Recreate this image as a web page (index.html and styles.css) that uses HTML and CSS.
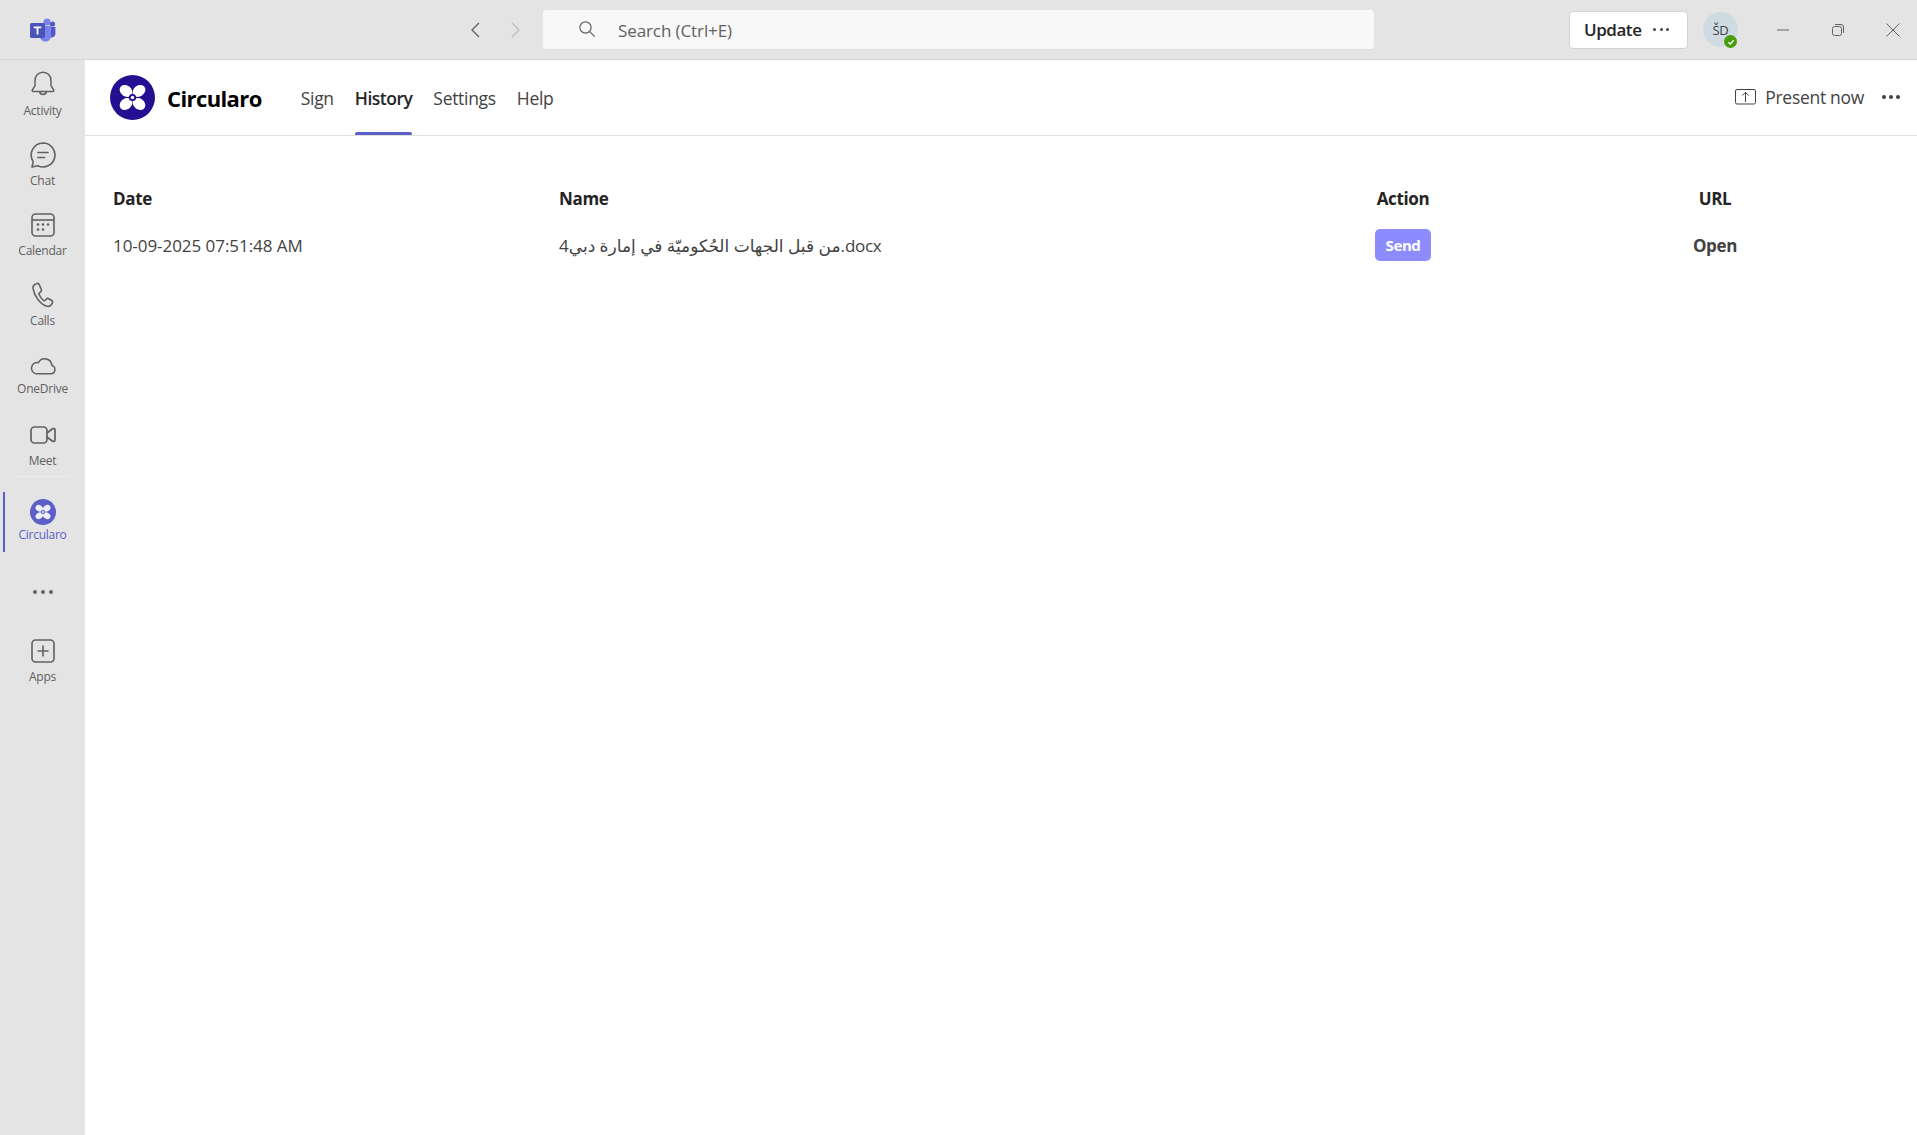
FILE: index.html
```html
<!DOCTYPE html>
<html lang="en">
<head>
<meta charset="utf-8">
<title>Circularo</title>
<link rel="stylesheet" href="styles.css">
</head>
<body>
<header class="titlebar">
  <div class="tb-logo">
    <svg viewBox="0 0 26 24" width="26" height="24">
      <circle cx="17" cy="4" r="3.6" fill="#7b83eb"/>
      <circle cx="22.500" cy="6" r="2.600" fill="#5059c9"/>
      <path d="M19 9h6.400v7a3.600 3.600 0 0 1-6.400 2z" fill="#5059c9"/>
      <path d="M9 8h12v10a5.500 5.500 0 0 1-11 .5z" fill="#7b83eb"/>
      <rect x="0" y="5" width="15" height="15" rx="1.600" fill="#4b53bc"/>
      <path d="M3.700 8.600h7.600v1.700H8.400v6.200H6.600v-6.200H3.700z" fill="#fff"/>
    </svg>
  </div>
  <nav class="tb-nav">
    <svg class="chev" viewBox="0 0 12 18" width="12" height="18"><path d="M10 2 3 9l7 7" fill="none" stroke="#616161" stroke-width="1.300"/></svg>
    <svg class="chev" viewBox="0 0 12 18" width="12" height="18"><path d="m2 2 7 7-7 7" fill="none" stroke="#bdbdbd" stroke-width="1.300"/></svg>
  </nav>
  <div class="search">
    <svg viewBox="0 0 18 18" width="18" height="18"><circle cx="7.500" cy="7.500" r="5.600" fill="none" stroke="#616161" stroke-width="1.200"/><path d="m11.700 11.700 5 5" stroke="#616161" stroke-width="1.200"/></svg>
    <span>Search (Ctrl+E)</span>
  </div>
  <button class="update"><span>Update</span><i class="dots dots-sm"><b></b><b></b><b></b></i></button>
  <div class="avatar">ŠD
    <span class="status"><svg viewBox="0 0 12 12" width="12" height="12"><path d="m3.400 6.200 1.800 1.800 3.500-3.700" fill="none" stroke="#fff" stroke-width="1.300"/></svg></span>
  </div>
  <div class="win">
    <svg viewBox="0 0 14 14" width="14" height="14"><path d="M1 7h12" stroke="#616161" stroke-width="1"/></svg>
    <svg viewBox="0 0 14 14" width="14" height="14"><rect x="1.500" y="3.500" width="9" height="9" rx="2" fill="none" stroke="#616161"/><path d="M4 1.500h6a2.500 2.500 0 0 1 2.500 2.500v6" fill="none" stroke="#616161"/></svg>
    <svg viewBox="0 0 14 14" width="14" height="14"><path d="m.5.5 13 13m0-13-13 13" stroke="#616161" stroke-width="1"/></svg>
  </div>
</header>
<div class="shell">
  <aside class="rail">
    <a class="rail-item r-activity">
      <svg viewBox="0 0 24 26" width="24" height="26"><path d="M12 1.200a8 8 0 0 0-8 8v5.300L1.300 19.200c-.3.600.1 1.300.8 1.300h19.800c.7 0 1.100-.7.800-1.300L20 14.500V9.200a8 8 0 0 0-8-8zM8.600 20.800a3.500 3.500 0 0 0 6.800 0" fill="none" stroke="#616161" stroke-width="1.500"/></svg>
      <span>Activity</span>
    </a>
    <a class="rail-item r-chat">
      <svg viewBox="0 0 26 26" width="26" height="26"><path d="M13 1a12 12 0 1 1-5.300 22.800L2 25l1.200-5.400A12 12 0 0 1 13 1z" fill="none" stroke="#616161" stroke-width="1.600" stroke-linejoin="round"/><path d="M8 10.500h10M8 15.500h6.500" stroke="#616161" stroke-width="1.700" stroke-linecap="round"/></svg>
      <span>Chat</span>
    </a>
    <a class="rail-item r-cal">
      <svg viewBox="0 0 24 24" width="24" height="24"><rect x="1" y="1" width="22" height="22" rx="3.500" fill="none" stroke="#616161" stroke-width="1.600"/><path d="M1 7h22" stroke="#616161" stroke-width="1.600"/><g fill="#616161"><circle cx="7" cy="11.500" r="1.300"/><circle cx="12" cy="11.500" r="1.300"/><circle cx="17" cy="11.500" r="1.300"/><circle cx="7" cy="16.500" r="1.300"/><circle cx="12" cy="16.500" r="1.300"/></g></svg>
      <span>Calendar</span>
    </a>
    <a class="rail-item r-calls">
      <svg viewBox="0 0 22 26" width="22" height="26"><path d="M4.600 1.600 2.800 2.500C1.300 3.300.8 5 1.100 6.700c.7 4 2.500 8 5 11.100 2.400 3 5.600 5.800 9 6.500 1.800.4 3.400-.4 4.300-1.800l.9-1.500c.5-.9.2-2-.6-2.500l-3-1.800c-.8-.5-1.700-.3-2.300.4l-1 1.200c-.5.5-1.200.6-1.800.2-1.700-1.200-3.500-3.700-4.500-6-.3-.6-.1-1.300.4-1.700l1.200-1c.7-.6.9-1.500.6-2.300L7.200 2.500c-.4-1-1.600-1.400-2.600-.9z" fill="none" stroke="#616161" stroke-width="1.600" stroke-linejoin="round"/></svg>
      <span>Calls</span>
    </a>
    <a class="rail-item r-drive">
      <svg viewBox="0 0 26 18" width="26" height="18"><path d="M6 16.800h14.800a4.300 4.300 0 0 0 1.100-8.400A7.200 7.200 0 0 0 8.400 5.700 5.600 5.600 0 1 0 6 16.800z" fill="none" stroke="#616161" stroke-width="1.500" stroke-linejoin="round"/></svg>
      <span>OneDrive</span>
    </a>
    <a class="rail-item r-meet">
      <svg viewBox="0 0 26 20" width="26" height="20"><rect x="1" y="2" width="16" height="16" rx="3.500" fill="none" stroke="#616161" stroke-width="1.700"/><path d="m17 8 5.500-4.200c.7-.5 2.500-.2 2.500 1v10.400c0 1.200-1.800 1.500-2.500 1L17 12" fill="none" stroke="#616161" stroke-width="1.700"/></svg>
      <span>Meet</span>
    </a>
    <hr class="rail-sep">
    <a class="rail-item r-app">
      <svg viewBox="0 0 45 45" width="26" height="26"><circle cx="22.500" cy="22.500" r="22.500" fill="#5b5fc7"/><g fill="#fff" fill-opacity=".9"><ellipse cx="16" cy="16" rx="6.800" ry="5.400" transform="rotate(35 16 16)"/><ellipse cx="29" cy="16" rx="6.800" ry="5.400" transform="rotate(-35 29 16)"/><ellipse cx="16" cy="29" rx="6.800" ry="5.400" transform="rotate(-35 16 29)"/><ellipse cx="29" cy="29" rx="6.800" ry="5.400" transform="rotate(35 29 29)"/></g><circle cx="22.500" cy="22.500" r="3.600" fill="#5b5fc7"/><circle cx="22.500" cy="22.500" r="1.700" fill="#fff"/></svg>
      <span>Circularo</span>
    </a>
    <a class="rail-more"><i class="dots"><b></b><b></b><b></b></i></a>
    <a class="rail-item r-apps">
      <svg viewBox="0 0 24 24" width="24" height="24"><rect x="1" y="1" width="22" height="22" rx="3.500" fill="none" stroke="#616161" stroke-width="1.600"/><path d="M12 6.500v11M6.500 12h11" stroke="#616161" stroke-width="1.600"/></svg>
      <span>Apps</span>
    </a>
  </aside>
  <main class="content">
    <div class="tabbar">
      <svg class="brand-logo" viewBox="0 0 45 45" width="45" height="45"><circle cx="22.500" cy="22.500" r="22.500" fill="#240f92"/><g fill="#fff"><ellipse cx="16" cy="16" rx="6.800" ry="5.400" transform="rotate(35 16 16)"/><ellipse cx="29" cy="16" rx="6.800" ry="5.400" transform="rotate(-35 29 16)"/><ellipse cx="16" cy="29" rx="6.800" ry="5.400" transform="rotate(-35 16 29)"/><ellipse cx="29" cy="29" rx="6.800" ry="5.400" transform="rotate(35 29 29)"/></g><circle cx="22.500" cy="22.500" r="3.600" fill="#240f92"/><circle cx="22.500" cy="22.500" r="1.700" fill="#fff"/></svg>
      <span class="brand">Circularo</span>
      <nav class="tabs">
        <a class="tab">Sign</a>
        <a class="tab active">History</a>
        <a class="tab">Settings</a>
        <a class="tab">Help</a>
      </nav>
      <div class="present">
        <svg viewBox="0 0 21 16" width="21" height="16"><rect x=".5" y=".5" width="20" height="14.500" rx="1.500" fill="none" stroke="#424242"/><path d="M10.500 13V3.500M7.300 6.500l3.200-3.200 3.200 3.200" fill="none" stroke="#424242"/></svg>
        <span>Present now</span>
        <i class="dots dots-dark"><b></b><b></b><b></b></i>
      </div>
    </div>
    <table class="history">
      <thead>
        <tr>
          <th class="c-date">Date</th>
          <th class="c-name">Name</th>
          <th class="c-mid">Action</th>
          <th class="c-mid">URL</th>
        </tr>
      </thead>
      <tbody>
        <tr>
          <td class="cell-date">10-09-2025 07:51:48 AM</td>
          <td>من قبل الجهات الحُكوميّة في إمارة دبي4.docx</td>
          <td class="cell-c"><button class="send">Send</button></td>
          <td class="cell-c"><a class="open">Open</a></td>
        </tr>
      </tbody>
    </table>
  </main>
</div>
</body>
</html>
```
FILE: styles.css
```css
* { box-sizing: border-box; }
html, body { margin: 0; height: 100%; overflow: hidden; }
body {
  font-family: "Open Sans", "Noto Sans", "DejaVu Sans", sans-serif;
  background: #fff;
  color: #242424;
  display: flex;
  flex-direction: column;
}
svg { display: block; flex: none; }

.titlebar {
  height: 60px;
  flex: none;
  background: #e4e4e4;
  border-bottom: 1px solid #d6d6d6;
  display: flex;
  align-items: center;
  position: relative;
}
.tb-logo { margin-left: 30px; width: 26px; }
.tb-nav { margin-left: 413px; display: flex; gap: 29px; width: 53px; }
.search {
  margin-left: 21px;
  width: 831px;
  height: 40px;
  background: #f8f8f8;
  border-radius: 4px;
  border-bottom: 1px solid #e0e0e0;
  display: flex;
  align-items: center;
  padding-left: 35px;
  gap: 22px;
  font-size: 17px;
  letter-spacing: -.1px;
  color: #616161;
}
.search span { padding-top: 2px; }
.update {
  margin-left: 195px;
  width: 119px;
  height: 38px;
  background: #fff;
  border: 1px solid #d1d1d1;
  border-radius: 4px;
  display: flex;
  align-items: center;
  padding: 0 0 0 14px;
  font: 600 17px "Open Sans", sans-serif;
  letter-spacing: -.45px;
  color: #242424;
}
.update .dots { margin-left: 12px; }
.avatar {
  margin-left: 15px;
  width: 35px;
  height: 35px;
  border-radius: 50%;
  background: #cfdbe3;
  color: #424242;
  font-size: 13px;
  display: flex;
  align-items: center;
  justify-content: center;
  position: relative;
  letter-spacing: -.3px;
}
.status {
  position: absolute;
  right: 1px;
  bottom: -1px;
  width: 13px;
  height: 13px;
  border-radius: 50%;
  background: #4a9c0c;
  display: flex;
  align-items: center;
  justify-content: center;
}
.win { margin-left: 38px; display: flex; gap: 41px; }

.dots { display: inline-flex; gap: 4px; align-items: center; font-style: normal; }
.dots b { width: 4px; height: 4px; border-radius: 50%; background: #616161; display: block; }
.dots-sm { gap: 3.500px; }
.dots-sm b { width: 3px; height: 3px; background: #424242; }
.dots-dark { gap: 3px; }
.dots-dark b { background: #424242; }

.shell { flex: 1; display: flex; min-height: 0; }
.rail {
  width: 85px;
  flex: none;
  background: #e4e4e4;
  display: flex;
  flex-direction: column;
  align-items: stretch;
  padding-top: 9px;
}
.rail-item {
  display: flex;
  flex-direction: column;
  align-items: center;
  justify-content: flex-start;
  color: #616161;
  font-size: 12px;
  line-height: 16px;
  letter-spacing: -.25px;
  height: 70px;
  position: relative;
}
.rail-item span { margin-top: 6px; }
.r-activity { padding-top: 2px; }
.r-chat { padding-top: 3px; }
.r-chat span { margin-top: 5px; }
.r-cal { padding-top: 4px; }
.r-calls { padding-top: 3px; }
.r-calls span { margin-top: 5px; }
.r-drive { height: 69px; padding-top: 8px; }
.r-meet { height: 58px; padding-top: 7px; }
.r-meet span { margin-top: 8px; }
.rail-sep { margin: 0 15px; border: 0; border-top: 1px solid #ebebeb; height: 1px; }
.r-app { margin-top: 15px; height: 52px; padding-top: 7px; color: #5b5fc7; }
.r-app span { margin-top: 2px; }
.r-app::before {
  content: "";
  position: absolute;
  left: 3px;
  top: 0;
  width: 2px;
  height: 60px;
  background: #5b5fc7;
}
.rail-more { height: 95px; display: flex; justify-content: center; padding-top: 0; }
.r-apps { padding-top: 0; }

.content { flex: 1; min-width: 0; display: flex; flex-direction: column; }
.tabbar {
  height: 76px;
  flex: none;
  border-bottom: 1px solid #e0e0e0;
  display: flex;
  align-items: center;
  padding: 0 17px 0 25px;
}
.brand { margin-left: 12px; font-size: 22px; font-weight: 700; color: #000; letter-spacing: -.6px; }
.tabs { margin-left: 39px; display: flex; align-self: stretch; gap: 21px; }
.tab {
  display: flex;
  align-items: center;
  font-size: 17.500px;
  letter-spacing: -.3px;
  color: #424242;
  position: relative;
}
.tab.active { color: #242424; font-weight: 600; letter-spacing: -.5px; }
.tab.active::after {
  content: "";
  position: absolute;
  left: 0;
  right: 0;
  bottom: 0;
  height: 3px;
  border-radius: 2px 2px 0 0;
  background: #5b5fc7;
}
.present { margin-left: auto; padding-bottom: 2px; display: flex; align-items: center; color: #424242; font-size: 17.500px; letter-spacing: -.3px; }
.present span { margin: 0 18px 0 9px; }

.history {
  margin: 41px 0 0 28px;
  width: 1758px;
  table-layout: fixed;
  border-collapse: collapse;
  font-size: 17px;
  letter-spacing: -.35px;
}
.history th { font-weight: 700; font-size: 17px; height: 42px; padding: 0; text-align: left; color: #242424; }
.history td { height: 52px; padding: 0; color: #424242; }
.cell-date { letter-spacing: -.05px; }
.c-date { width: 446px; }
.c-name { width: 688px; }
.c-mid { width: 312px; text-align: center !important; }
.cell-c { text-align: center; }
.send {
  width: 56px;
  height: 32px;
  border: 0;
  border-radius: 5px;
  background: #8c8cff;
  color: #fff;
  font: 700 15px "Open Sans", sans-serif;
  letter-spacing: -.4px;
  padding: 0;
}
.open { font-weight: 700; color: #424242; }
```
